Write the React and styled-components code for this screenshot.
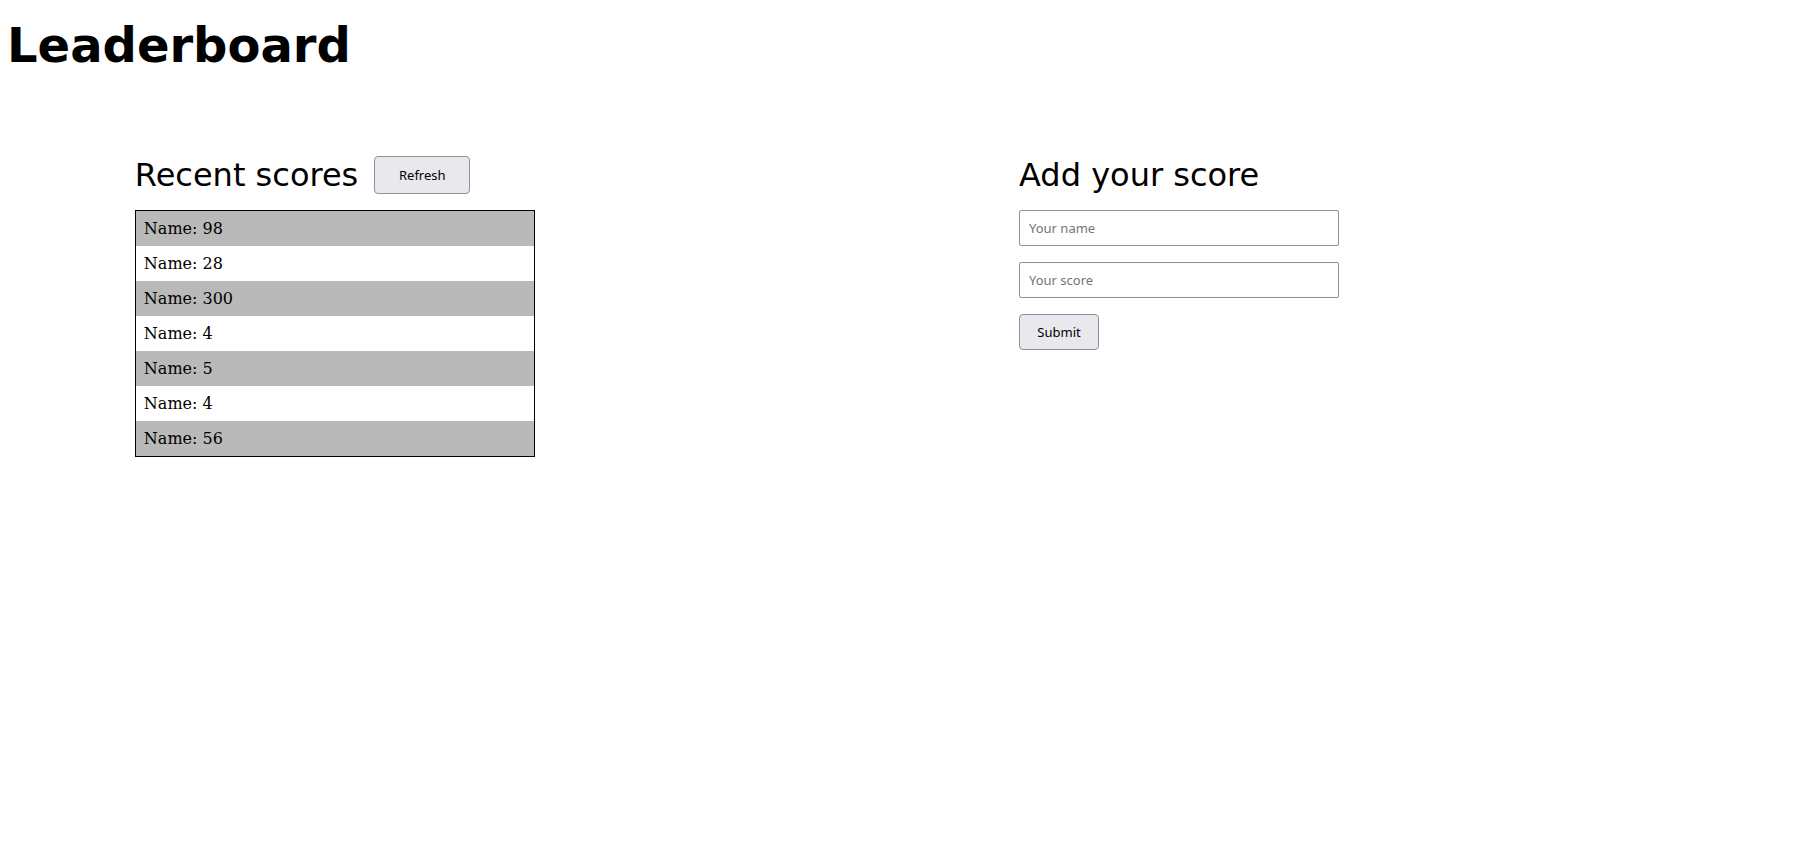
import { useState } from 'react';
import styled, { createGlobalStyle } from 'styled-components';

const GlobalStyle = createGlobalStyle`
  * {
    box-sizing: border-box;
  }

  body {
    margin: 0;
    background: #ffffff;
    color: #000000;
    font-family: 'DejaVu Serif', serif;
    font-size: 16px;
  }
`;

const Title = styled.h1`
  margin: 0;
  padding: 17px 7px 0;
  font-family: 'DejaVu Sans', sans-serif;
  font-size: 48px;
  font-weight: 700;
  line-height: 56px;
`;

const Main = styled.main`
  display: grid;
  grid-template-columns: 1fr 1fr;
  align-items: start;
  column-gap: 240px;
  padding: 83px 7.5% 16px;
`;

const Panel = styled.section`
  display: flex;
  flex-direction: column;
  gap: 16px;
`;

const PanelHeader = styled.header`
  display: flex;
  align-items: center;
  gap: 16px;
  height: 38px;
`;

const PanelTitle = styled.h2`
  margin: 0;
  font-family: 'DejaVu Sans', sans-serif;
  font-size: 32px;
  font-weight: 400;
  line-height: 38px;
  white-space: nowrap;
`;

const Button = styled.button`
  width: ${({ $wide }) => ($wide ? '96px' : '80px')};
  height: ${({ $wide }) => ($wide ? '38px' : '36px')};
  padding: 0;
  border: 1px solid #8f8f9d;
  border-radius: 4px;
  background: #e9e9ed;
  color: #000000;
  font-family: 'Noto Sans', sans-serif;
  font-size: 13px;
  cursor: pointer;

  &:hover {
    background: #d0d0d7;
  }
`;

const ScoreList = styled.ul`
  width: 100%;
  max-width: 400px;
  margin: 0;
  padding: 0;
  border: 1px solid #000000;
  list-style: none;
`;

const ScoreItem = styled.li`
  padding: 8px;
  line-height: 19px;

  &:nth-child(odd) {
    background: #b9b9b9;
  }
`;

const Form = styled.form`
  display: flex;
  flex-direction: column;
  align-items: flex-start;
  gap: 16px;
`;

const Input = styled.input`
  width: 100%;
  max-width: 320px;
  height: 36px;
  padding: 0 9px;
  border: 1px solid #8f8f9d;
  border-radius: 2px;
  background: #ffffff;
  color: #000000;
  font-family: 'Noto Sans', sans-serif;
  font-size: 13px;

  &::placeholder {
    color: #757575;
    opacity: 1;
  }
`;

const initialScores = [98, 28, 300, 4, 5, 4, 56].map((score) => ({ name: 'Name', score }));

export default function App() {
  const [saved, setSaved] = useState(initialScores);
  const [shown, setShown] = useState(initialScores);
  const [name, setName] = useState('');
  const [score, setScore] = useState('');

  const submit = (event) => {
    event.preventDefault();
    if (!name || !score) return;
    setSaved([...saved, { name, score }]);
    setName('');
    setScore('');
  };

  return (
    <>
      <GlobalStyle />
      <Title>Leaderboard</Title>
      <Main>
        <Panel>
          <PanelHeader>
            <PanelTitle>Recent scores</PanelTitle>
            <Button type="button" $wide onClick={() => setShown(saved)}>
              Refresh
            </Button>
          </PanelHeader>
          <ScoreList>
            {shown.map((entry, index) => (
              <ScoreItem key={index}>{`${entry.name}: ${entry.score}`}</ScoreItem>
            ))}
          </ScoreList>
        </Panel>
        <Panel>
          <PanelHeader>
            <PanelTitle>Add your score</PanelTitle>
          </PanelHeader>
          <Form onSubmit={submit}>
            <Input
              type="text"
              aria-label="Your name"
              placeholder="Your name"
              value={name}
              onChange={(event) => setName(event.target.value)}
            />
            <Input
              type="text"
              inputMode="numeric"
              aria-label="Your score"
              placeholder="Your score"
              value={score}
              onChange={(event) => setScore(event.target.value)}
            />
            <Button type="submit">Submit</Button>
          </Form>
        </Panel>
      </Main>
    </>
  );
}
